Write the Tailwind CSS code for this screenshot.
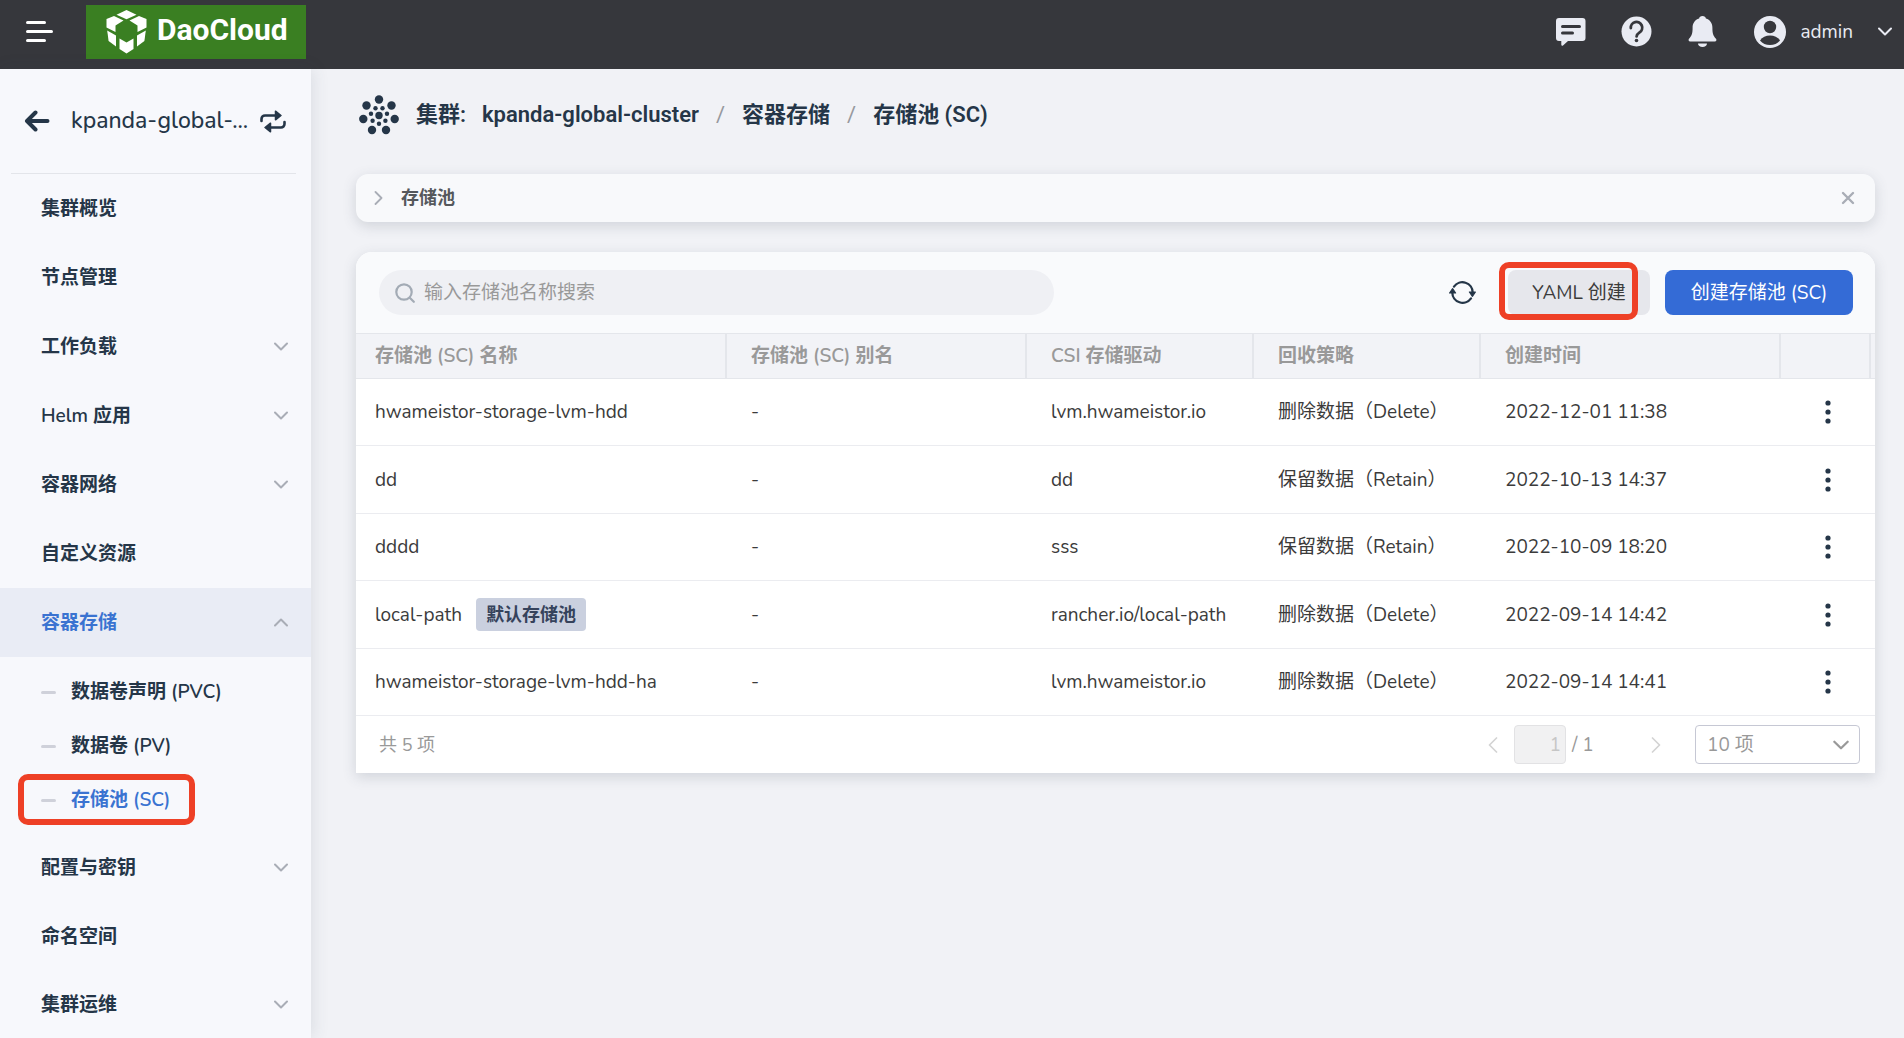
<!DOCTYPE html>
<html lang="zh-CN">
<head>
<meta charset="utf-8">
<title>存储池 (SC)</title>
<script src="https://cdn.jsdelivr.net/npm/@tailwindcss/browser@4"></script>
</head>
<body class="flex min-h-screen flex-col bg-[#f1f2f6] font-['Nunito','Noto_Sans','Noto_Sans_CJK_SC',sans-serif] text-[19px] leading-7 text-[#3b3b3b]">

<svg class="hidden">
  <symbol id="down" viewBox="0 0 14 9"><path d="M1 1.500l6 6 6-6" fill="none" stroke="currentColor" stroke-width="2" stroke-linecap="round" stroke-linejoin="round"/></symbol>
  <symbol id="dots" viewBox="0 0 6 24"><circle cx="3" cy="3" r="2.600"/><circle cx="3" cy="12" r="2.600"/><circle cx="3" cy="21" r="2.600"/></symbol>
</svg>

<header class="flex h-[69px] shrink-0 items-center bg-[#36373c] pr-3 pl-[26px] text-[#e9ebf3]">
  <button type="button" aria-label="菜单" class="mb-1.5"><svg class="h-[21px] w-[27px]" viewBox="0 0 27 21" fill="none" stroke="#fff" stroke-width="3" stroke-linecap="round"><path d="M1.500 1.500h17M1.500 10.500h24M1.500 19.500h17"/></svg></button>
  <a href="#" class="mb-1.5 ml-[33px] flex h-[54px] w-[220px] items-center gap-2.5 bg-[#3a7f22] pl-5 text-white">
    <svg class="h-11 w-[41px] shrink-0" viewBox="0 0 41 44" fill="#fff">
      <path d="M20.500 0L30.500 4.700 20.500 9.300 10.500 4.700z"/>
      <path d="M8 6L17.500 10.500 9.500 15.500V22L.5 17.500V9z"/>
      <path d="M33 6L23.500 10.500 31.500 15.500V22L40.500 17.500V9z"/>
      <path d="M1.200 20.500L10 25.500V36.500L2.600 31z"/>
      <path d="M39.800 20.500L31 25.500V36.500L38.400 31z"/>
      <path d="M13.500 28.500L20.500 32.500 27.500 28.500V39L20.500 43.500 13.500 39z"/>
    </svg>
    <span class="pb-1 font-['Roboto',sans-serif] text-[30px] leading-9 font-bold">DaoCloud</span>
  </a>
  <nav class="mb-1.5 ml-auto flex items-center">
    <button type="button" aria-label="消息"><svg class="h-[29px] w-[31px]" viewBox="0 0 31 29"><path fill="currentColor" d="M4 1h23.500a3 3 0 0 1 3 3v17a3 3 0 0 1-3 3H13l-5 4.500a1 1 0 0 1-1.700-.7V24H4a3 3 0 0 1-3-3V4a3 3 0 0 1 3-3z"/><path d="M7.500 9.500h17M7.500 16h10" stroke="#36373c" stroke-width="3" stroke-linecap="round"/></svg></button>
    <button type="button" aria-label="帮助" class="ml-[35px]"><svg class="size-[31px]" viewBox="0 0 31 31"><circle cx="15.500" cy="15.500" r="15" fill="currentColor"/><path d="M9.800 12a5.700 5.700 0 1 1 8.800 4.400c-2 1.400-3 2.200-3 4" fill="none" stroke="#36373c" stroke-width="2.800" stroke-linecap="round"/><circle cx="15.500" cy="24.500" r="1.800" fill="#36373c"/></svg></button>
    <button type="button" aria-label="通知" class="ml-9"><svg class="h-[31px] w-[29px]" viewBox="0 0 29 31" fill="currentColor"><path d="M14.500 0c2 0 3.200 1.200 3.400 2.600 4.200 1.300 6.500 4.700 6.500 9.200 0 5.800.8 8 3.600 11 1 1.200.3 2.700-1.200 2.700H2.200C.7 25.500 0 24 1 22.800c2.800-3 3.600-5.200 3.600-11 0-4.500 2.300-7.900 6.500-9.200C11.300 1.200 12.500 0 14.500 0z"/><path d="M10 27.500h9c0 2.200-2 3.500-4.500 3.500S10 29.700 10 27.500z"/></svg></button>
    <button type="button" class="ml-[37px] flex items-center">
      <svg class="size-8" viewBox="0 0 32 32"><circle cx="16" cy="16" r="16" fill="currentColor"/><circle cx="16" cy="11" r="6.200" fill="#36373c"/><path d="M6 24.500c2.200-3.500 5.800-5 10-5s7.800 1.500 10 5c-2.500 3-6 4.600-10 4.600S8.500 27.500 6 24.500z" fill="#36373c"/></svg>
      <span class="ml-[14px]">admin</span>
      <svg class="ml-[25px] h-[9px] w-[14px]"><use href="#down"/></svg>
    </button>
  </nav>
</header>

<div class="flex grow">
  <aside class="relative w-[311px] shrink-0 bg-[#f7f8fc] font-semibold text-[#253648] shadow-[2px_0_16px_rgba(60,70,90,0.12)]">
    <div class="mr-[15px] ml-[11px] flex h-[105px] items-center border-b border-[#e3e5ea] pr-2.5 pl-[13px]">
      <a href="#" aria-label="返回"><svg class="h-[22px] w-[26px]" viewBox="0 0 26 22" fill="none" stroke="currentColor" stroke-width="4" stroke-linecap="round" stroke-linejoin="round"><path d="M11.500 2.500L3 11l8.500 8.500M3.500 11H23.500"/></svg></a>
      <span class="ml-[21px] text-[23px] font-medium">kpanda-global-...</span>
      <button type="button" aria-label="切换集群" class="ml-auto"><svg class="h-[23px] w-[26px]" viewBox="0 0 26 23" fill="none" stroke="currentColor" stroke-width="2.600" stroke-linecap="round"><path d="M1.500 11V9a3.500 3.500 0 0 1 3.500-3.500H16M24.500 12v2a3.500 3.500 0 0 1-3.500 3.500H10"/><path d="M15.500 1.200v8.600L21 5.500zM10.500 13.200v8.600L5 17.500z" fill="currentColor" stroke-width="1.500" stroke-linejoin="round"/></svg></button>
    </div>
    <nav>
      <a href="#" class="flex h-[69px] items-center pl-[41px]">集群概览</a>
      <a href="#" class="flex h-[69px] items-center pl-[41px]">节点管理</a>
      <a href="#" class="flex h-[69px] items-center justify-between pr-[23px] pl-[41px]">工作负载<svg class="h-[9px] w-[14px] text-[#a9adb6]"><use href="#down"/></svg></a>
      <a href="#" class="flex h-[69px] items-center justify-between pr-[23px] pl-[41px]">Helm 应用<svg class="h-[9px] w-[14px] text-[#a9adb6]"><use href="#down"/></svg></a>
      <a href="#" class="flex h-[69px] items-center justify-between pr-[23px] pl-[41px]">容器网络<svg class="h-[9px] w-[14px] text-[#a9adb6]"><use href="#down"/></svg></a>
      <a href="#" class="flex h-[69px] items-center pl-[41px]">自定义资源</a>
      <a href="#" class="flex h-[69px] items-center justify-between bg-[#e9ecf5] pr-[23px] pl-[41px] text-[#3a73d1]">容器存储<svg class="h-[9px] w-[14px] rotate-180 text-[#a9adb6]"><use href="#down"/></svg></a>
      <div class="pt-2 pb-1.5">
        <a href="#" class="flex h-[54px] items-center gap-[15px] pl-[41px]"><span class="h-[3px] w-[15px] rounded bg-[#cfd1da]"></span>数据卷声明 (PVC)</a>
        <a href="#" class="flex h-[54px] items-center gap-[15px] pl-[41px]"><span class="h-[3px] w-[15px] rounded bg-[#cfd1da]"></span>数据卷 (PV)</a>
        <a href="#" class="relative flex h-[54px] items-center gap-[15px] pl-[41px] text-[#3a73d1]"><span class="h-[3px] w-[15px] rounded bg-[#cfd1da]"></span>存储池 (SC)
          <span class="absolute top-px left-[18px] h-[51px] w-[177px] rounded-[10px] border-6 border-[#ee4026]"></span></a>
      </div>
      <a href="#" class="flex h-[69px] items-center justify-between pr-[23px] pl-[41px]">配置与密钥<svg class="h-[9px] w-[14px] text-[#a9adb6]"><use href="#down"/></svg></a>
      <a href="#" class="flex h-[69px] items-center pl-[41px]">命名空间</a>
      <a href="#" class="flex h-[67px] items-center justify-between pr-[23px] pl-[41px]">集群运维<svg class="h-[9px] w-[14px] text-[#a9adb6]"><use href="#down"/></svg></a>
    </nav>
  </aside>

  <main class="min-w-0 grow pr-[29px] pl-[45px]">
    <nav aria-label="breadcrumb" class="flex h-[105px] items-center pb-3.5 pl-[3px] font-['Roboto','Noto_Sans_CJK_SC',sans-serif] text-[22px] font-semibold text-[#253648]">
      <svg class="size-10" viewBox="0 0 40 40" fill="currentColor">
        <circle cx="20" cy="4.500" r="4.200"/><circle cx="32.500" cy="10.500" r="4.200"/><circle cx="35.700" cy="24" r="4.200"/><circle cx="27" cy="35" r="4.200"/><circle cx="13" cy="35" r="4.200"/><circle cx="4.300" cy="24" r="4.200"/><circle cx="7.500" cy="10.500" r="4.200"/>
        <circle cx="20" cy="20.500" r="3.700"/>
        <circle cx="16.500" cy="13.300" r="2.200"/><circle cx="23.500" cy="13.300" r="2.200"/><circle cx="28" cy="18.800" r="2.200"/><circle cx="26.400" cy="25.700" r="2.200"/><circle cx="20" cy="28.800" r="2.200"/><circle cx="13.600" cy="25.700" r="2.200"/><circle cx="12" cy="18.800" r="2.200"/>
      </svg>
      <span class="ml-[17px]">集群:</span>
      <a href="#" class="ml-4">kpanda-global-cluster</a>
      <span class="mx-[17px] font-normal text-[#97999e]">/</span>
      <a href="#">容器存储</a>
      <span class="mx-[17px] font-normal text-[#97999e]">/</span>
      <span>存储池 (SC)</span>
    </nav>

    <section class="flex h-12 items-center rounded-xl bg-[#f8f9fb] pr-5 pl-[18px] text-lg font-semibold text-[#55585c] shadow-[0_4px_14px_rgba(60,70,90,0.18)]">
      <button type="button" class="flex items-center gap-[18px]"><svg class="h-[14px] w-[9px] text-[#a9adb6]" viewBox="0 0 9 14"><path d="M1.500 1l6 6-6 6" fill="none" stroke="currentColor" stroke-width="1.800" stroke-linecap="round" stroke-linejoin="round"/></svg>存储池</button>
      <button type="button" aria-label="关闭" class="ml-auto text-[#a9adb6]"><svg class="size-[14px]" viewBox="0 0 14 14" stroke="currentColor" stroke-width="2.400" stroke-linecap="round"><path d="M2 2l10 10M12 2L2 12"/></svg></button>
    </section>

    <section class="mt-[30px] rounded-t-2xl bg-white shadow-[0_4px_14px_rgba(60,70,90,0.18)]">
      <div class="flex h-[81px] items-center rounded-t-2xl bg-[#f9fafc] pr-[22px] pl-[23px]">
        <label class="flex h-[45px] w-[675px] items-center gap-[9px] rounded-full bg-[#eff0f4] pl-4">
          <svg class="size-5 text-[#a3abb5]" viewBox="0 0 20 20" fill="none" stroke="currentColor" stroke-width="2.200" stroke-linecap="round"><circle cx="9" cy="9" r="7.700"/><path d="M15 15l3.800 3.800"/></svg>
          <input type="text" aria-label="搜索" placeholder="输入存储池名称搜索" class="min-w-0 grow bg-transparent outline-none placeholder:text-[#999]">
        </label>
        <button type="button" aria-label="刷新" class="ml-auto text-[#253648]"><svg class="h-[23px] w-[27px]" viewBox="0 0 27 23" fill="none" stroke="currentColor" stroke-width="2.300" stroke-linecap="round"><path d="M5 5.600A10.300 10.300 0 0 1 23.700 11.500M22 17.400A10.300 10.300 0 0 1 3.300 11.500"/><path d="M20.400 11h6l-3 4.300zM.6 12h6l-3-4.300z" fill="currentColor" stroke-width="1.200" stroke-linejoin="round"/></svg></button>
        <div class="relative ml-8">
          <button type="button" class="h-[45px] w-[142px] rounded-lg bg-[#e6e7ec]">YAML 创建</button>
          <span class="absolute -top-2 -left-[9px] h-[58px] w-[139px] rounded-[10px] border-6 border-[#ee4026]"></span>
        </div>
        <button type="button" class="ml-[15px] h-[45px] w-[188px] rounded-lg bg-[#346bd6] text-white">创建存储池 (SC)</button>
      </div>

      <table class="w-full table-fixed border-separate border-spacing-0 text-left">
        <colgroup><col><col class="w-[300px]"><col class="w-[227px]"><col class="w-[227px]"><col class="w-[300px]"><col class="w-[94px]"></colgroup>
        <thead class="text-[#999]">
          <tr class="h-[46px] bg-[#f2f3f7]">
            <th class="border-y border-r-2 border-[#e4e6eb] pl-[19px] font-semibold">存储池 (SC) 名称</th>
            <th class="border-y border-r-2 border-[#e4e6eb] pl-6 font-semibold">存储池 (SC) 别名</th>
            <th class="border-y border-r-2 border-[#e4e6eb] pl-6 font-semibold">CSI 存储驱动</th>
            <th class="border-y border-r-2 border-[#e4e6eb] pl-6 font-semibold">回收策略</th>
            <th class="border-y border-r-2 border-[#e4e6eb] pl-6 font-semibold">创建时间</th>
            <th class="border-y border-[#e4e6eb] pr-1"><div class="h-11 border-r-2 border-[#e4e6eb]"></div></th>
          </tr>
        </thead>
        <tbody id="rows"></tbody>
      </table>

      <div class="flex h-[57px] items-center pr-[15px] pl-[23px] text-[#999]">
        <span class="text-lg">共 5 项</span>
        <button type="button" aria-label="上一页" class="ml-auto text-[#d4d4d4]"><svg class="h-4 w-2.5" viewBox="0 0 10 16"><path d="M8.500 1L1.500 8l7 7" fill="none" stroke="currentColor" stroke-width="1.700" stroke-linecap="round" stroke-linejoin="round"/></svg></button>
        <input type="text" disabled value="1" aria-label="页码" class="ml-4 h-[39px] w-[52px] rounded border border-[#e2e2e4] bg-[#f1f1f2] pr-1 text-right text-[#c6c6c6]">
        <span class="ml-1.5 w-[79px]">/ 1</span>
        <button type="button" aria-label="下一页" class="text-[#d4d4d4]"><svg class="h-4 w-2.5" viewBox="0 0 10 16"><path d="M1.500 1l7 7-7 7" fill="none" stroke="currentColor" stroke-width="1.700" stroke-linecap="round" stroke-linejoin="round"/></svg></button>
        <div class="relative ml-[34px]">
          <select aria-label="每页条数" class="h-[39px] w-[165px] appearance-none rounded border border-[#c6c8d4] bg-white pl-[11px] outline-none"><option>10 项</option></select>
          <svg class="pointer-events-none absolute top-[15px] right-[11px] h-2.5 w-4"><use href="#down"/></svg>
        </div>
      </div>
    </section>
  </main>
</div>

<script>
const rows = [
  ['hwameistor-storage-lvm-hdd', 'lvm.hwameistor.io', '删除数据（Delete）', '2022-12-01 11:38'],
  ['dd', 'dd', '保留数据（Retain）', '2022-10-13 14:37'],
  ['dddd', 'sss', '保留数据（Retain）', '2022-10-09 18:20'],
  ['local-path', 'rancher.io/local-path', '删除数据（Delete）', '2022-09-14 14:42', '默认存储池'],
  ['hwameistor-storage-lvm-hdd-ha', 'lvm.hwameistor.io', '删除数据（Delete）', '2022-09-14 14:41'],
];
document.getElementById('rows').innerHTML = rows.map(([name, driver, policy, time, tag]) => `
  <tr class="h-[67px] even:h-[68px] whitespace-nowrap">
    <td class="border-b border-[#ebecf0] pl-[19px]"><div class="flex items-center gap-[14px]">${name}${tag ? `<span class="flex h-[33px] items-center rounded bg-[#cad0df] px-2.5 text-lg font-semibold text-[#36435c]">${tag}</span>` : ''}</div></td>
    <td class="border-b border-[#ebecf0] pl-6">-</td>
    <td class="border-b border-[#ebecf0] pl-6">${driver}</td>
    <td class="border-b border-[#ebecf0] pl-6">${policy}</td>
    <td class="border-b border-[#ebecf0] pl-6">${time}</td>
    <td class="border-b border-[#ebecf0] pr-px"><button type="button" aria-label="更多操作" class="mx-auto block text-[#253648]"><svg class="h-6 w-1.5 fill-current"><use href="#dots"/></svg></button></td>
  </tr>`).join('');
</script>
</body>
</html>
